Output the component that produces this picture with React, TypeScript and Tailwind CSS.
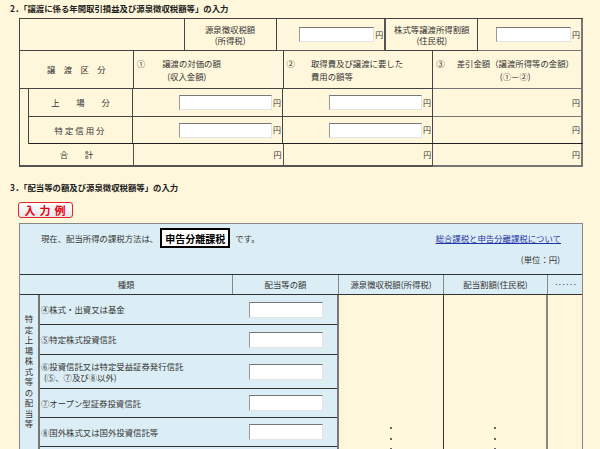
import React from 'react'

function Field({ className }: { className: string }) {
  return (
    <input
      type="text"
      className={`border border-t-[#777] border-l-[#999] border-r-[#e4e4e4] border-b-[#e4e4e4] bg-white outline-none ${className}`}
    />
  )
}

function Yen() {
  return <span className="ml-[1px] text-[8px] leading-none">円</span>
}

const verticalLabel = '特定上場株式等の配当等'

const dividendRows = [
  { h: 'h-[30px]', lines: ['④株式・出資又は基金'] },
  { h: 'h-[30px]', lines: ['⑤特定株式投資信託'] },
  { h: 'h-[34px]', lines: ['⑥投資信託又は特定受益証券発行信託', '(⑤、⑦及び⑧以外)'] },
  { h: 'h-[29px]', lines: ['⑦オープン型証券投資信託'] },
  { h: 'h-[29px]', lines: ['⑧国外株式又は国外投資信託等'] },
  { h: 'h-[30px]', lines: [] as string[] },
]

export default function App() {
  return (
    <div className="h-[449px] w-[600px] overflow-hidden bg-[#FFF7DC] font-['Noto_Sans_CJK_JP','Noto_Sans_CJK_SC',sans-serif] text-[8.4px] text-[#333]">
      {/* 2. 譲渡 */}
      <div className="h-[18px] pl-[10px] pt-[2px] font-bold leading-[13px] text-[#222]">
        2．「譲渡に係る年間取引損益及び源泉徴収税額等」の入力
      </div>

      <div className="ml-[19px] w-[564px] border-l border-t border-[#444]">
        <div className="flex h-[32px]">
          <div className="w-[165px] border-b border-r border-[#444]" />
          <div className="flex w-[92px] flex-col items-center justify-center border-b border-r border-[#444] leading-[11px]">
            <span>源泉徴収税額</span>
            <span>(所得税)</span>
          </div>
          <div className="flex w-[110px] items-center justify-end border-b border-r-2 border-[#555] pr-[1px]">
            <Field className="h-[15px] w-[75px]" />
            <Yen />
          </div>
          <div className="flex w-[92px] flex-col items-center justify-center border-b border-r border-[#444] leading-[11px]">
            <span>株式等譲渡所得割額</span>
            <span>(住民税)</span>
          </div>
          <div className="flex w-[105px] items-center justify-end border-b border-r-2 border-[#777] pr-[1px]">
            <Field className="h-[15px] w-[75px]" />
            <Yen />
          </div>
        </div>

        <div className="flex h-[38px]">
          <div className="flex w-[114px] items-center justify-center border-b border-r border-[#444]">
            譲　渡　区　分
          </div>
          <div className="flex w-[150px] items-center border-b border-r border-[#444] pl-[3px]">
            <div className="flex items-start leading-[13px]">
              <span>①</span>
              <div className="ml-[17px] flex flex-col">
                <span>譲渡の対価の額</span>
                <span className="pl-[5px]">(収入金額)</span>
              </div>
            </div>
          </div>
          <div className="flex w-[150px] items-center border-b border-r border-[#444] pl-[3px]">
            <div className="flex items-start leading-[13px]">
              <span>②</span>
              <div className="ml-[16px] flex flex-col">
                <span>取得費及び譲渡に要した</span>
                <span>費用の額等</span>
              </div>
            </div>
          </div>
          <div className="flex w-[150px] items-center border-b border-r-2 border-[#777] pl-[3px]">
            <div className="flex items-start leading-[13px]">
              <span>③</span>
              <div className="ml-[12px] flex flex-col items-center">
                <span>差引金額（譲渡所得等の金額）</span>
                <span>(①－②)</span>
              </div>
            </div>
          </div>
        </div>

        <div className="flex">
          <div className="w-[10px] border-r border-[#444]" />
          <div className="flex w-[554px] flex-col">
            <div className="flex h-[28px]">
              <div className="flex w-[104px] items-center justify-center border-b border-r border-[#444]">上　　場　　分</div>
              <div className="flex w-[150px] items-center justify-end border-b border-r border-[#444] pr-[1px]">
                <Field className="h-[15px] w-[93px]" />
                <Yen />
              </div>
              <div className="flex w-[150px] items-center justify-end border-b border-r border-[#444] pr-[1px]">
                <Field className="h-[15px] w-[93px]" />
                <Yen />
              </div>
              <div className="flex w-[150px] items-center justify-end border-b border-r-2 border-[#777] pr-[1px]">
                <Yen />
              </div>
            </div>
            <div className="flex h-[27px] border-b border-[#222]">
              <div className="flex w-[104px] items-center justify-center border-r border-[#444] tracking-[2px]">特定信用分</div>
              <div className="flex w-[150px] items-center justify-end border-r border-[#444] pr-[1px]">
                <Field className="h-[15px] w-[93px]" />
                <Yen />
              </div>
              <div className="flex w-[150px] items-center justify-end border-r border-[#444] pr-[1px]">
                <Field className="h-[15px] w-[93px]" />
                <Yen />
              </div>
              <div className="flex w-[150px] items-center justify-end border-r-2 border-[#777] pr-[1px]">
                <Yen />
              </div>
            </div>
          </div>
        </div>

        <div className="flex h-[23px]">
          <div className="flex w-[114px] items-center justify-center border-b-2 border-r border-[#555]">合　　計</div>
          <div className="flex w-[150px] items-center justify-end border-b-2 border-r border-[#555] pr-[1px]">
            <Yen />
          </div>
          <div className="flex w-[150px] items-center justify-end border-b-2 border-r border-[#555] pr-[1px]">
            <Yen />
          </div>
          <div className="flex w-[150px] items-center justify-end border-b-2 border-r-2 border-[#777] pr-[1px]">
            <Yen />
          </div>
        </div>
      </div>

      {/* 3. 配当 */}
      <div className="mt-[14px] h-[13px] pl-[10px] font-bold leading-[13px] text-[#222]">
        3．「配当等の額及び源泉徴収税額等」の入力
      </div>

      <div className="ml-[18px] mt-[8px] flex h-[16px] w-[55px] items-center justify-center rounded-[3px] border border-[#e0282c] bg-linear-to-b from-white to-[#e6e6e6] pl-[3px] text-[11px] font-bold leading-none tracking-[4px] text-[#e60012]">
        入力例
      </div>

      <div className="ml-[19px] mt-[5px] w-[564px] border-x border-t border-[#888] bg-[#DCEEF5]">
        <div className="h-[50px] pt-[4px]">
          <div className="flex h-[20px] items-center pl-[21px] pr-[21px]">
            <span>現在、配当所得の課税方法は、</span>
            <span className="ml-[2px] flex h-[20px] items-center border-2 border-black bg-white px-[3px] text-[10px] font-bold text-black">
              申告分離課税
            </span>
            <span className="ml-[5px]">です。</span>
            <a href="#" className="ml-auto text-[#1f33a6] underline">
              総合課税と申告分離課税について
            </a>
          </div>
          <div className="mt-[5px] pr-[22px] text-right leading-[12px]">(単位：円)</div>
        </div>

        <div className="flex h-[21px] border-y border-[#333]">
          <div className="flex w-[213px] items-center justify-center border-r border-[#888]">種類</div>
          <div className="flex w-[106px] items-center justify-center border-r border-[#888]">配当等の額</div>
          <div className="flex w-[105px] items-center justify-center border-r border-[#888]">源泉徴収税額(所得税)</div>
          <div className="flex w-[104px] items-center justify-center border-r border-[#888]">配当割額(住民税)</div>
          <div className="flex w-[34px] items-center justify-center tracking-[-1px]">······</div>
        </div>

        <div className="flex">
          <div className="flex w-[319px] border-r-2 border-[#777]">
            <div className="flex w-[20px] flex-col items-center border-r-2 border-[#777] pt-[18px]">
              {verticalLabel.split('').map((ch, i) => (
                <span key={i} className="block leading-[10.5px]">
                  {ch}
                </span>
              ))}
            </div>
            <div className="flex w-[297px] flex-col">
              {dividendRows.map((row, i) => (
                <div key={i} className={`flex items-center border-b border-[#333] ${row.h}`}>
                  <div className="flex w-[194px] flex-col pl-[1px] leading-[11px]">
                    {row.lines.map((l, j) => (
                      <span key={j} className={j > 0 ? 'pl-[3px]' : ''}>
                        {l}
                      </span>
                    ))}
                  </div>
                  <div className="flex w-[103px] justify-center">
                    <Field className="h-[16px] w-[74px]" />
                  </div>
                </div>
              ))}
            </div>
          </div>
          <div className="flex w-[105px] flex-col items-center gap-[8.5px] border-r border-[#333] bg-[#FFF7DC] pt-[132px]">
            <span className="h-[2px] w-[2px] bg-[#666]" />
            <span className="h-[2px] w-[2px] bg-[#666]" />
            <span className="h-[2px] w-[2px] bg-[#666]" />
          </div>
          <div className="flex w-[104px] flex-col items-center gap-[8.5px] border-r-2 border-[#888] bg-[#FFF7DC] pt-[132px]">
            <span className="h-[2px] w-[2px] bg-[#666]" />
            <span className="h-[2px] w-[2px] bg-[#666]" />
            <span className="h-[2px] w-[2px] bg-[#666]" />
          </div>
          <div className="w-[34px] bg-[#FFF7DC]" />
        </div>
      </div>
    </div>
  )
}
